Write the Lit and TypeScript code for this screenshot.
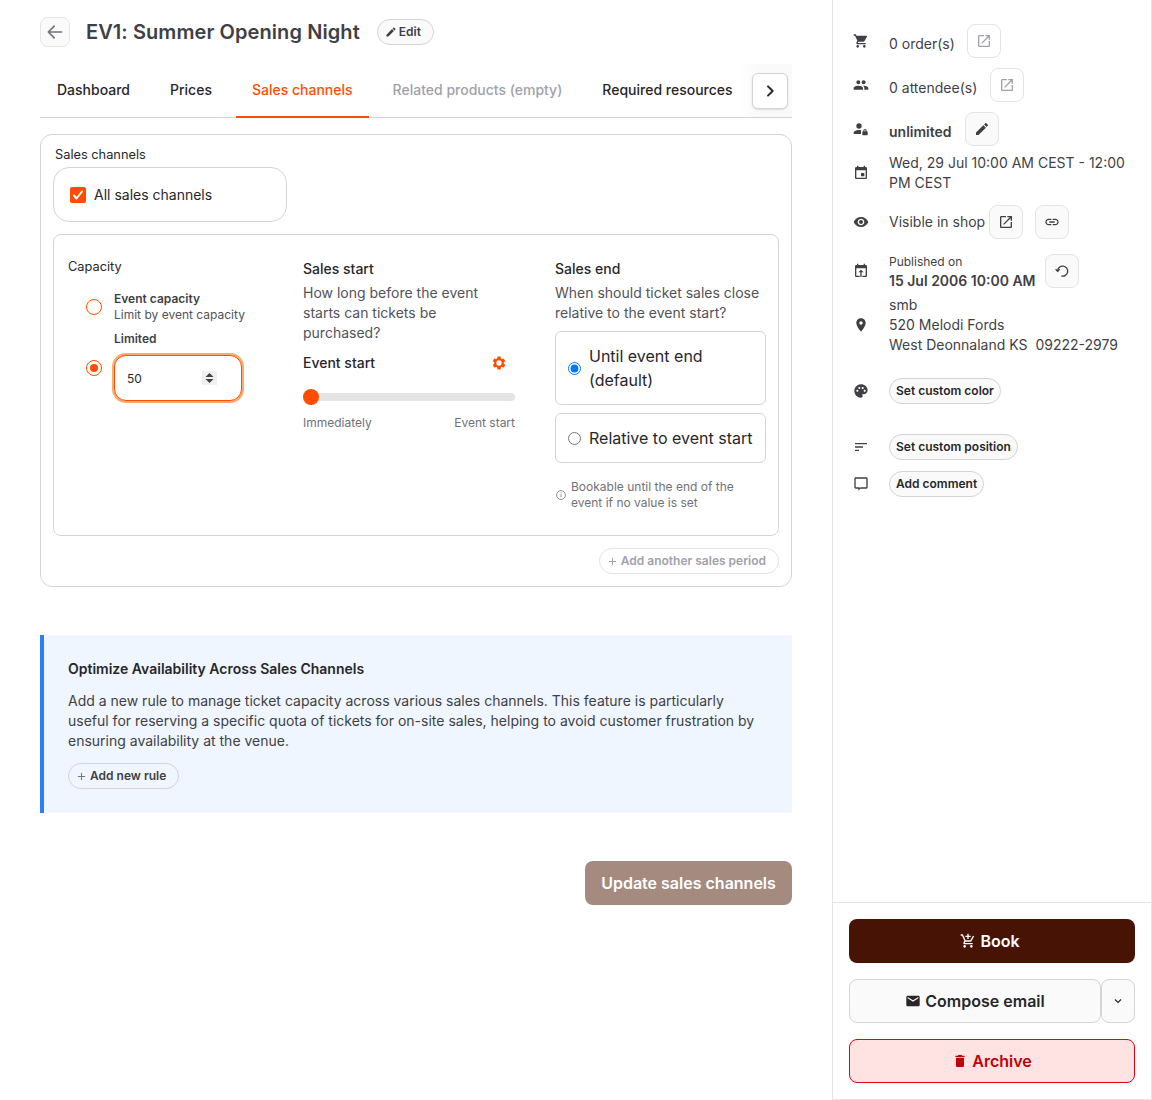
import { LitElement, html, css, svg } from "lit";
import { customElement } from "lit/decorators.js";

const P: Record<string, string> = {
  cart: "M7 18c-1.1 0-1.99.9-1.99 2S5.9 22 7 22s2-.9 2-2-.9-2-2-2zM1 2v2h2l3.6 7.59-1.35 2.45c-.16.28-.25.61-.25.96 0 1.1.9 2 2 2h12v-2H7.42c-.14 0-.25-.11-.25-.25l.03-.12.9-1.63h7.45c.75 0 1.41-.41 1.75-1.03l3.58-6.49c.08-.14.12-.31.12-.48 0-.55-.45-1-1-1H5.21l-.94-2H1zm16 16c-1.1 0-1.99.9-1.99 2s.89 2 1.99 2 2-.9 2-2-.9-2-2-2z",
  people: "M16 11c1.66 0 2.99-1.34 2.99-3S17.66 5 16 5c-1.66 0-3 1.34-3 3s1.34 3 3 3zm-8 0c1.66 0 2.99-1.34 2.99-3S9.66 5 8 5C6.34 5 5 6.34 5 8s1.34 3 3 3zm0 2c-2.33 0-7 1.17-7 3.5V19h14v-2.5c0-2.33-4.67-3.5-7-3.5zm8 0c-.29 0-.62.02-.97.05 1.16.84 1.97 1.97 1.97 3.45V19h6v-2.5c0-2.33-4.67-3.5-7-3.5z",
  open: "M19 19H5V5h7V3H5c-1.11 0-2 .9-2 2v14c0 1.1.89 2 2 2h14c1.1 0 2-.9 2-2v-7h-2v7zM14 3v2h3.59l-9.83 9.83 1.41 1.41L19 6.41V10h2V3h-7z",
  edit: "M3 17.25V21h3.75L17.81 9.94l-3.75-3.75L3 17.25zM20.71 7.04c.39-.39.39-1.02 0-1.41l-2.34-2.34c-.39-.39-1.02-.39-1.41 0l-1.83 1.83 3.75 3.75 1.83-1.83z",
  event: "M17 12h-5v5h5v-5zM16 1v2H8V1H6v2H5c-1.11 0-1.99.9-1.99 2L3 19c0 1.1.89 2 2 2h14c1.1 0 2-.9 2-2V5c0-1.1-.9-2-2-2h-1V1h-2zm3 18H5V8h14v11z",
  eye: "M12 4.5C7 4.5 2.73 7.61 1 12c1.73 4.39 6 7.5 11 7.5s9.27-3.11 11-7.5c-1.73-4.39-6-7.5-11-7.5zM12 17c-2.76 0-5-2.24-5-5s2.24-5 5-5 5 2.24 5 5-2.24 5-5 5zm0-8c-1.66 0-3 1.34-3 3s1.34 3 3 3 3-1.34 3-3-1.34-3-3-3z",
  link: "M3.9 12c0-1.71 1.39-3.1 3.1-3.1h4V7H7c-2.76 0-5 2.24-5 5s2.24 5 5 5h4v-1.9H7c-1.71 0-3.1-1.39-3.1-3.1zM8 13h8v-2H8v2zm9-6h-4v1.9h4c1.71 0 3.1 1.39 3.1 3.1s-1.39 3.1-3.1 3.1h-4V17h4c2.76 0 5-2.24 5-5s-2.24-5-5-5z",
  publish: "M19 3h-1V1h-2v2H8V1H6v2H5c-1.11 0-2 .9-2 2v14c0 1.1.89 2 2 2h5v-2H5V8h14v11h-5v2h5c1.1 0 2-.9 2-2V5c0-1.1-.9-2-2-2zm-7 7l-4 4h3v7h2v-7h3l-4-4z",
  place: "M12 2C8.13 2 5 5.13 5 9c0 5.25 7 13 7 13s7-7.75 7-13c0-3.87-3.13-7-7-7zm0 9.5c-1.38 0-2.5-1.12-2.5-2.5s1.12-2.5 2.5-2.5 2.5 1.12 2.5 2.5-1.12 2.5-2.5 2.5z",
  palette: "M12 2C6.49 2 2 6.49 2 12s4.49 10 10 10c1.38 0 2.5-1.12 2.5-2.5 0-.61-.23-1.2-.64-1.67-.08-.1-.13-.21-.13-.33 0-.28.22-.5.5-.5H16c3.31 0 6-2.69 6-6 0-4.96-4.49-9-10-9zm5.5 11c-.83 0-1.5-.67-1.5-1.5s.67-1.5 1.5-1.5 1.5.67 1.5 1.5-.67 1.5-1.5 1.5zm-3-4c-.83 0-1.5-.67-1.5-1.5S13.67 6 14.5 6s1.5.67 1.5 1.5S15.33 9 14.5 9zM5 11.5c0-.83.67-1.5 1.5-1.5s1.5.67 1.5 1.5S7.33 13 6.5 13 5 12.33 5 11.5zm6-4c0 .83-.67 1.5-1.5 1.5S8 8.33 8 7.5 8.67 6 9.5 6s1.5.67 1.5 1.5z",
  sort: "M3 18h6v-2H3v2zM3 6v2h18V6H3zm0 7h12v-2H3v2z",
  comment: "M4 2h16c1.1 0 2 .9 2 2v13c0 1.1-.9 2-2 2h-9l-3 3v-3H4c-1.1 0-2-.9-2-2V4c0-1.1.9-2 2-2zm0 2v13h6v1.5L11.5 17H20V4H4z",
  addcart: "M11 9h2V6h3V4h-3V1h-2v3H8v2h3v3zm-4 9c-1.1 0-1.99.9-1.99 2S5.9 22 7 22s2-.9 2-2-.9-2-2-2zm10 0c-1.1 0-1.99.9-1.99 2s.89 2 1.99 2 2-.9 2-2-.9-2-2-2zm-9.83-3.25l.03-.12.9-1.63h7.45c.75 0 1.41-.41 1.75-1.03l3.86-7.01L19.42 4h-.01l-1.1 2-2.76 5H8.53l-.13-.27L6.16 6l-.95-2-.94-2H1v2h2l3.6 7.59-1.35 2.45c-.16.28-.25.61-.25.96 0 1.1.9 2 2 2h12v-2H7.42c-.13 0-.25-.11-.25-.25z",
  mail: "M20 4H4c-1.1 0-1.99.9-1.99 2L2 18c0 1.1.9 2 2 2h16c1.1 0 2-.9 2-2V6c0-1.1-.9-2-2-2zm0 4l-8 5-8-5V6l8 5 8-5v2z",
  trash: "M6 19c0 1.1.9 2 2 2h8c1.1 0 2-.9 2-2V7H6v12zM19 4h-3.5l-1-1h-5l-1 1H5v2h14V4z",
  gear: "M19.14 12.94c.04-.3.06-.61.06-.94 0-.32-.02-.64-.07-.94l2.03-1.58c.18-.14.23-.41.12-.61l-1.92-3.32c-.12-.22-.37-.29-.59-.22l-2.39.96c-.5-.38-1.03-.7-1.62-.94l-.36-2.54c-.04-.24-.24-.41-.48-.41h-3.84c-.24 0-.43.17-.47.41l-.36 2.54c-.59.24-1.13.57-1.62.94l-2.39-.96c-.22-.08-.47 0-.59.22L2.74 8.87c-.12.21-.08.47.12.61l2.03 1.58c-.05.3-.09.63-.09.94s.02.64.07.94l-2.03 1.58c-.18.14-.23.41-.12.61l1.92 3.32c.12.22.37.29.59.22l2.39-.96c.5.38 1.03.7 1.62.94l.36 2.54c.05.24.24.41.48.41h3.84c.24 0 .44-.17.47-.41l.36-2.54c.59-.24 1.13-.56 1.62-.94l2.39.96c.22.08.47 0 .59-.22l1.92-3.32c.12-.22.07-.47-.12-.61l-2.01-1.58zM12 16a4 4 0 1 1 0-8 4 4 0 0 1 0 8z",
  userlock: "M9 3.5a4 4 0 1 1 0 8 4 4 0 0 1 0-8zM9 13.5c1.2 0 2.5.15 3.6.45-.4.6-.6 1.3-.6 2.05v3.5H1v-2c0-2.7 5.3-4 8-4zM18 12c1.4 0 2.5 1.1 2.5 2.5v1h.5c.55 0 1 .45 1 1v4c0 .55-.45 1-1 1h-6c-.55 0-1-.45-1-1v-4c0-.55.45-1 1-1h.5v-1c0-1.4 1.1-2.5 2.5-2.5zm0 1.5c-.55 0-1 .45-1 1v1h2v-1c0-.55-.45-1-1-1z",
};

const icon = (name: string, cls = "") =>
  html`<svg class="ic ${cls}" viewBox="0 0 24 24" fill="currentColor" aria-hidden="true">${svg`<path d=${P[name]}></path>`}</svg>`;

@customElement("app-root")
export class AppRoot extends LitElement {
  static styles = css`
    :host {
      display: flex;
      width: 1152px;
      height: 1100px;
      background: #fff;
      font-family: Inter, "Liberation Sans", sans-serif;
      font-size: 14px;
      line-height: 20px;
      color: #27272a;
      overflow: hidden;
    }
    * { box-sizing: border-box; }
    .ic { display: block; width: 16px; height: 16px; flex: none; }

    .main { width: 832px; flex: none; padding: 17px 40px 0; }
    .head { display: flex; align-items: center; height: 30px; }
    .back {
      width: 30px; height: 30px; border: 1px solid #e4e4e7; border-radius: 8px; background: #fafafa;
      display: flex; align-items: center; justify-content: center; color: #71717a;
    }
    .back svg { width: 20px; height: 20px; }
    .title { margin: 0 0 0 16px; font-size: 20px; letter-spacing: .08px; line-height: 30px; font-weight: 600; color: #3f3f46; }
    .edit { margin-left: 17px; }
    .pill {
      display: inline-flex; align-items: center; height: 26px; padding: 0 12px; gap: 3px;
      border: 1px solid #d4d4d8; border-radius: 13px; background: #fafafa;
      font-size: 12px; line-height: 16px; font-weight: 600; color: #3f3f46; white-space: nowrap;
    }
    .pill .ic { width: 12px; height: 12px; }
    .edit.pill { padding: 0 12px 0 7px; gap: 2px; }
    .pill.side { padding: 0 6px; color: #27272a; }

    .tabs-wrap { position: relative; margin-top: 17px; height: 54px; border-bottom: 1px solid #d4d4d8; }
    .tabs { display: flex; gap: 8px; padding-left: 1px; height: 54px; }
    .tab {
      display: flex; align-items: center; padding: 0 16px 1px; height: 54px; white-space: nowrap;
      font-weight: 500; color: #27272a; border-bottom: 2px solid transparent;
    }
    .tab.on { color: #ff4d00; border-bottom-color: #ff4d00; }
    .tab.off { color: #a1a1aa; }
    .fade {
      position: absolute; right: 0; top: 0; bottom: 0; width: 52px; padding: 9px 4px 0 12px;
      background: linear-gradient(to right, rgba(250,250,250,0), #fafafa 30%);
    }
    .arrow {
      width: 36px; height: 36px; background: #fff; border: 1px solid #d4d4d8; border-radius: 6px;
      box-shadow: 0 1px 2px rgba(0,0,0,.12); display: flex; align-items: center; justify-content: center; color: #27272a;
    }
    .arrow svg { width: 16px; height: 16px; }

    .card { margin-top: 16px; border: 1px solid #d4d4d8; border-radius: 12px; padding: 12px; }
    .lbl { font-size: 12.8px; line-height: 16px; font-weight: 400; color: #27272a; }
    .card > .lbl { margin-left: 2px; }
    .allbox {
      margin-top: 4px; width: 234px; height: 55px; border: 1px solid #d4d4d8; border-radius: 16px;
      display: flex; align-items: center; gap: 8px; padding-left: 16px;
    }
    .check { width: 16px; height: 16px; border-radius: 2px; background: #ff4d00; display: flex; align-items: center; justify-content: center; }
    .check svg { width: 12px; height: 12px; }
    .inner {
      margin-top: 12px; border: 1px solid #d4d4d8; border-radius: 8px; padding: 24px 12px 24px 14px;
      display: grid; grid-template-columns: 195px 212px 211px; column-gap: 40px;
    }
    .cap-list { padding-left: 18px; margin-top: 16px; display: flex; flex-direction: column; gap: 8px; }
    .cap-row { display: flex; align-items: center; gap: 12px; }
    .rad { width: 16px; height: 16px; border-radius: 50%; border: 1px solid #ff4d00; flex: none; display: flex; align-items: center; justify-content: center; background: #fff; }
    .rad.on::after { content: ""; width: 8px; height: 8px; border-radius: 50%; background: #ff4d00; }
    .cap-t { font-size: 12px; line-height: 16px; font-weight: 600; color: #3f3f46; }
    .cap-s { font-size: 12px; line-height: 16px; color: #52525b; }
    .num {
      margin: 8px 0 4px; width: 128px; height: 46px; border: 1px solid #ff4d00; border-radius: 12px;
      box-shadow: 0 0 0 2px #fdac6e; padding: 0 24px 0 12px;
      display: flex; align-items: center; justify-content: space-between; background: #fff;
      font-size: 12px; color: #27272a;
    }
    .num span { padding-top: 1px; }
    .spin { width: 15px; height: 14px; background: #f0f0f0; display: block; }
    .h { font-weight: 500; color: #27272a; }
    .desc { margin-top: 4px; color: #52525b; }
    .es { margin-top: 10px; display: flex; justify-content: space-between; align-items: center; padding-right: 8px; }
    .es .ic { color: #ff4d00; width: 16px; height: 16px; }
    .track { margin-top: 20px; height: 8px; border-radius: 4px; background: #e4e4e7; position: relative; }
    .thumb { position: absolute; left: 0; top: -4px; width: 16px; height: 16px; border-radius: 50%; background: #ff4d00; }
    .ends { margin-top: 14px; display: flex; justify-content: space-between; font-size: 12px; line-height: 16px; color: #71717a; }
    .opt {
      margin-top: 8px; border: 1px solid #d4d4d8; border-radius: 6px; padding: 12px;
      display: flex; align-items: center; gap: 8px; font-size: 16px; line-height: 24px; color: #27272a;
    }
    .opt input { margin: 0; width: 13px; height: 13px; flex: none; }
    .info { margin-top: 16px; display: flex; align-items: center; gap: 5px; font-size: 12px; line-height: 16px; color: #71717a; padding-left: 1px; }
    .info svg { width: 10px; height: 10px; flex: none; }
    .foot { margin-top: 12px; display: flex; justify-content: flex-end; }
    .pill.dis { background: #fff; border-color: #e4e4e7; color: #a1a1aa; gap: 4px; padding: 0 12px 0 8px; }
    .plus { width: 9px; height: 9px; display: block; flex: none; }

    .banner { margin-top: 48px; background: #eff6ff; border-left: 4px solid #2b7fff; padding: 24px; }
    .banner .bt { font-weight: 600; color: #27272a; }
    .banner p { margin: 12px 0; color: #3f3f46; }
    .pill.add { background: #eff6ff; padding: 0 12px 0 8px; gap: 4px; color: #3f3f46; }
    .actions { margin-top: 48px; display: flex; justify-content: flex-end; }
    .update {
      width: 207px; height: 44px; border-radius: 8px; background: #a58a80; color: #fff;
      display: flex; align-items: center; justify-content: center; font-size: 16px; font-weight: 600;
    }

    .side-col {
      width: 320px; flex: none; height: 1100px; border: 1px solid #e4e4e7; border-top: 0;
      display: flex; flex-direction: column; color: #3f3f46;
    }
    .top { flex: 1; padding: 24px 16px 0 20px; }
    .row { display: grid; grid-template-columns: 16px 1fr; column-gap: 20px; align-items: center; }
    .row > .ic { color: #3f3f46; }
    .row.pub { align-items: start; }
    .row.pub > .ic { margin-top: 9px; }
    .line { display: flex; align-items: center; }
    .row.pub .line { align-items: flex-start; }
    .g4 { margin-top: 4px; } .g7 { margin-top: 7px; } .g10 { margin-top: 10px; } .g12 { margin-top: 12px; } .g15 { margin-top: 15px; }
    .g23 { margin-top: 23px; } .g30 { margin-top: 30px; } .g11 { margin-top: 11px; }
    .tx { padding-top: 6px; }
    .tx.b { font-weight: 600; }
    .ib {
      width: 34px; height: 34px; flex: none; border: 1px solid #e4e4e7; border-radius: 8px; background: #fafafa;
      display: flex; align-items: center; justify-content: center; color: #3f3f46;
    }
    .ib.dim { color: #a1a1aa; background: #fff; }
    .ml12 { margin-left: 12px; } .ml13 { margin-left: 13px; } .ml4 { margin-left: 4px; } .ml9 { margin-left: 9px; }
    .pub-s { font-size: 12px; line-height: 16px; }
    .pub-b { font-weight: 600; line-height: 20px; margin-top: 1px; }

    .bottom { border-top: 1px solid #e4e4e7; padding: 16px; display: flex; flex-direction: column; gap: 16px; }
    .btn {
      height: 44px; border-radius: 8px; display: flex; align-items: center; justify-content: center; gap: 4px;
      font-size: 16px; line-height: 24px; font-weight: 600; border: 1px solid transparent;
    }
    .btn.book { background: #471304; color: #fff; padding-right: 4px; }
    .split { display: flex; }
    .btn.mail { flex: 1; background: #fafafa; border-color: #d4d4d8; color: #27272a; }
    .btn.more { width: 34px; background: #fafafa; border-color: #d4d4d8; color: #27272a; }
    .btn.more svg { width: 12px; height: 12px; }
    .btn.arch { background: #ffe2e2; border-color: #e7000b; color: #c10007; }
  `;

  render() {
    return html`
      <div class="main">
        <div class="head">
          <div class="back"><svg viewBox="0 0 24 24" fill="none" stroke="currentColor" stroke-width="2" stroke-linecap="round" stroke-linejoin="round"><path d="M20 12H4M11 5l-7 7 7 7"></path></svg></div>
          <h1 class="title">EV1: Summer Opening Night</h1>
          <div class="pill edit">${icon("edit")}Edit</div>
        </div>

        <div class="tabs-wrap">
          <div class="tabs">
            <div class="tab">Dashboard</div>
            <div class="tab">Prices</div>
            <div class="tab on">Sales channels</div>
            <div class="tab off">Related products (empty)</div>
            <div class="tab">Required resources</div>
          </div>
          <div class="fade">
            <div class="arrow"><svg viewBox="0 0 24 24" fill="none" stroke="currentColor" stroke-width="3" stroke-linecap="round" stroke-linejoin="round"><path d="M9 5l7 7-7 7"></path></svg></div>
          </div>
        </div>

        <div class="card">
          <div class="lbl">Sales channels</div>
          <div class="allbox">
            <div class="check"><svg viewBox="0 0 24 24" fill="none" stroke="#fff" stroke-width="4" stroke-linecap="round" stroke-linejoin="round"><path d="M4 13l5 6L20 5"></path></svg></div>
            All sales channels
          </div>
          <div class="inner">
            <div>
              <div class="lbl">Capacity</div>
              <div class="cap-list">
                <div class="cap-row">
                  <div class="rad"></div>
                  <div><div class="cap-t">Event capacity</div><div class="cap-s">Limit by event capacity</div></div>
                </div>
                <div class="cap-row">
                  <div class="rad on"></div>
                  <div>
                    <div class="cap-t">Limited</div>
                    <div class="num"><span>50</span><svg class="spin" viewBox="0 0 15 14"><path d="M7.5 2l4 4H3.5zM7.5 12l-4-4h8z" fill="#3f3f46"></path></svg></div>
                  </div>
                </div>
              </div>
            </div>
            <div>
              <div class="h">Sales start</div>
              <div class="desc">How long before the event starts can tickets be purchased?</div>
              <div class="es"><span class="h">Event start</span>${icon("gear")}</div>
              <div class="track"><div class="thumb"></div></div>
              <div class="ends"><span>Immediately</span><span>Event start</span></div>
            </div>
            <div>
              <div class="h">Sales end</div>
              <div class="desc">When should ticket sales close relative to the event start?</div>
              <label class="opt"><input type="radio" name="end" checked /><span>Until event end (default)</span></label>
              <label class="opt"><input type="radio" name="end" /><span>Relative to event start</span></label>
              <div class="info">
                <svg viewBox="0 0 10 10" fill="none" stroke="currentColor" stroke-width=".8"><circle cx="5" cy="5" r="4.4"></circle><path d="M5 4.4v2.8M5 2.6v.9"></path></svg>
                <span>Bookable until the end of the event if no value is set</span>
              </div>
            </div>
          </div>
          <div class="foot">
            <div class="pill dis"><svg class="plus" viewBox="0 0 10 10" stroke="currentColor" stroke-width="1.1"><path d="M5 1v8M1 5h8"></path></svg>Add another sales period</div>
          </div>
        </div>

        <div class="banner">
          <div class="bt">Optimize Availability Across Sales Channels</div>
          <p>Add a new rule to manage ticket capacity across various sales channels. This feature is particularly useful for reserving a specific quota of tickets for on-site sales, helping to avoid customer frustration by ensuring availability at the venue.</p>
          <div class="pill add"><svg class="plus" viewBox="0 0 10 10" stroke="#71717a" stroke-width="1.1"><path d="M5 1v8M1 5h8"></path></svg>Add new rule</div>
        </div>

        <div class="actions"><div class="update">Update sales channels</div></div>
      </div>

      <div class="side-col">
        <div class="top">
          <div class="row">${icon("cart")}<div class="line"><span class="tx">0 order(s)</span><div class="ib dim ml12">${icon("open")}</div></div></div>
          <div class="row g10">${icon("people")}<div class="line"><span class="tx">0 attendee(s)</span><div class="ib dim ml13">${icon("open")}</div></div></div>
          <div class="row g10">${icon("userlock")}<div class="line"><span class="tx b">unlimited</span><div class="ib ml13">${icon("edit")}</div></div></div>
          <div class="row g7">${icon("event")}<div>Wed, 29 Jul 10:00 AM CEST - 12:00 PM CEST</div></div>
          <div class="row g12">${icon("eye")}<div class="line"><span>Visible in shop</span><div class="ib ml4">${icon("open")}</div><div class="ib ml12">${icon("link")}</div></div></div>
          <div class="row g15 pub">${icon("publish")}<div class="line"><div><div class="pub-s">Published on</div><div class="pub-b">15 Jul 2006 10:00 AM</div></div><div class="ib ml9"><svg class="ic" viewBox="0 0 24 24" fill="none" stroke="currentColor" stroke-width="2"><path d="M11 19.4A7.5 7.5 0 1 0 5.5 12"></path><path d="M2.4 9.4l3.1 3.1 3.1-3.1"></path></svg></div></div></div>
          <div class="row g4">${icon("place")}<div>smb<br />520 Melodi Fords<br />West Deonnaland KS&nbsp; 09222-2979</div></div>
          <div class="row g23">${icon("palette")}<div class="line"><div class="pill side">Set custom color</div></div></div>
          <div class="row g30">${icon("sort")}<div class="line"><div class="pill side">Set custom position</div></div></div>
          <div class="row g11">${icon("comment")}<div class="line"><div class="pill side">Add comment</div></div></div>
        </div>
        <div class="bottom">
          <div class="btn book">${icon("addcart")}Book</div>
          <div class="split">
            <div class="btn mail">${icon("mail")}Compose email</div>
            <div class="btn more"><svg viewBox="0 0 12 12" fill="none" stroke="currentColor" stroke-width="1.2"><path d="M3 4.5l3 3 3-3"></path></svg></div>
          </div>
          <div class="btn arch">${icon("trash")}Archive</div>
        </div>
      </div>
    `;
  }
}
